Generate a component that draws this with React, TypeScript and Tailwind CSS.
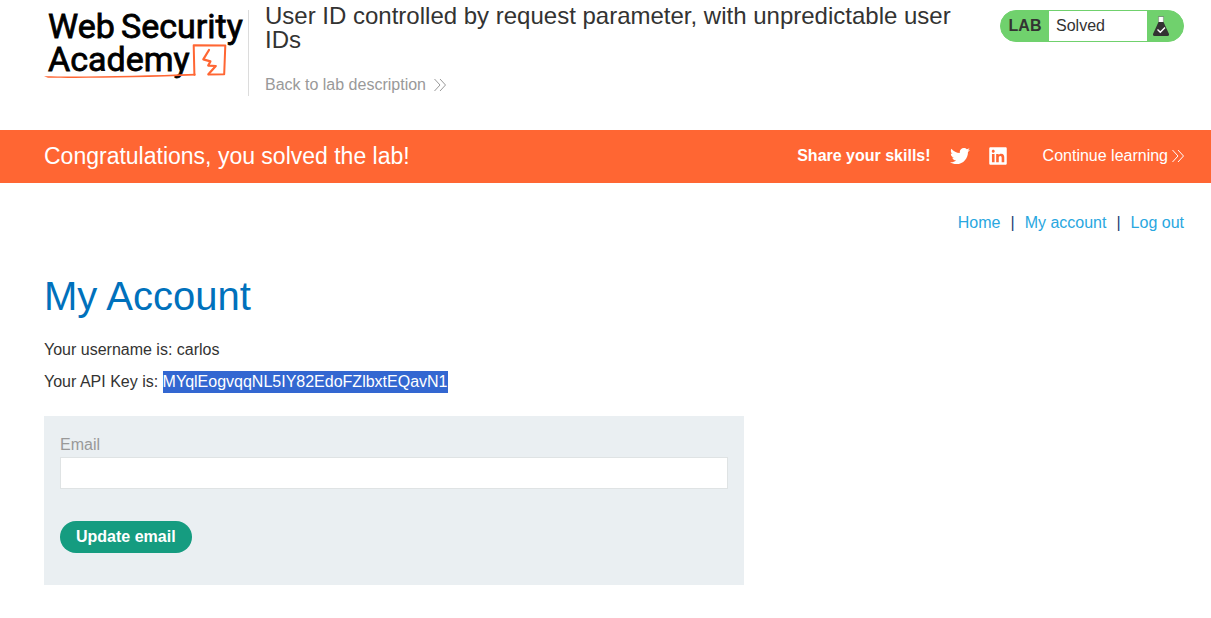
import type { ReactNode } from 'react';
import { FaLinkedin, FaTwitter } from 'react-icons/fa';

function Logo() {
  return (
    <svg viewBox="0 0 204 72" className="h-[72px] w-[204px] overflow-visible" role="img" aria-label="Web Security Academy">
      <g fill="#000" stroke="#000" strokeWidth=".8" fontFamily="Roboto, sans-serif" fontWeight="400" fontSize="34">
        <text x="4" y="28">Web</text>
        <text x="77" y="28">Security</text>
        <text x="4" y="61">Academy</text>
      </g>
      <g fill="none" stroke="#ff6633" strokeWidth="2" strokeLinejoin="round" strokeLinecap="round">
        <path d="M150.4 64.8 149.7 35.2 181.3 35.4 180.2 64.3 164.3 64.6" />
        <path d="M165 40 159.3 49.4 166.4 51.4 164.2 55.6 171.8 56 164.6 64" strokeWidth="2.2" />
      </g>
      <path d="M0 66.3 C40 67 100 66 151.5 63.8 L151.5 65.6 C100 67.8 40 68.2 4 67.8Z" fill="#ff6633" />
    </svg>
  );
}

function DoubleChevron() {
  return (
    <svg viewBox="0 0 12 14" className="h-3.5 w-3" fill="none" stroke="currentColor" strokeWidth="1" aria-hidden="true">
      <path d="M.5 1 6 7 .5 13M6 1 11.5 7 6 13" />
    </svg>
  );
}

function Flask() {
  return (
    <svg viewBox="0 0 16 20" className="h-5 w-4" aria-hidden="true">
      <path d="M5.5 1h5v5h-5z" fill="#fff" />
      <path d="M5.5 6h5L16 18q.3 2-1.6 2H1.6Q-.3 20 0 18z" fill="#333332" />
      <path d="M5 0.5h6M5.6 1v5M10.4 1v5" stroke="#777" strokeWidth=".6" fill="none" />
      <path d="m4.5 13.5 2.8 2.8 4.7-4.8" fill="none" stroke="#fff" strokeWidth="1.4" />
    </svg>
  );
}

function NavLink({ children }: { children: ReactNode }) {
  return (
    <a href="#" className="text-[#29a7df]">
      {children}
    </a>
  );
}

export default function App() {
  return (
    <div className="min-h-screen bg-white font-['Liberation_Sans',Arial,sans-serif] text-base text-[#333332]">
      <header className="flex items-start pt-2.5 pr-[27px] pb-[33px] pl-11">
        <a href="#" className="h-[86px] w-[205px] shrink-0 border-r border-[#dcdcdc]">
          <Logo />
        </a>
        <div className="-mt-1.5 ml-4 min-w-0 flex-1">
          <h2 className="text-2xl leading-6">
            User ID controlled by request parameter, with unpredictable user IDs
          </h2>
          <a href="#" className="mt-[21px] flex items-center gap-2 text-[#999]">
            Back to lab description
            <DoubleChevron />
          </a>
        </div>
        <div className="ml-9 flex h-8 w-[184px] shrink-0 items-stretch overflow-hidden rounded-full border border-[#70d16d] bg-[#70d16d]">
          <span className="flex w-12 items-center justify-center font-bold">LAB</span>
          <span className="flex flex-1 items-center bg-white pl-[7px]">Solved</span>
          <span className="flex w-9 items-center pl-1.5">
            <Flask />
          </span>
        </div>
      </header>

      <section className="flex h-[53px] items-center bg-[#ff6633] pr-[27px] pb-px pl-11 text-white">
        <h4 className="flex-1 text-[23px]">Congratulations, you solved the lab!</h4>
        <span className="mr-[19px] font-bold">Share your skills!</span>
        <a href="#" aria-label="Share on Twitter" className="mr-[18px]">
          <FaTwitter className="size-5" />
        </a>
        <a href="#" aria-label="Share on LinkedIn" className="mr-[35px]">
          <FaLinkedin className="size-5" />
        </a>
        <a href="#" className="flex items-center gap-1">
          Continue learning
          <DoubleChevron />
        </a>
      </section>

      <main className="pr-[27px] pl-11">
        <nav className="flex justify-end gap-2.5 pt-7">
          <NavLink>Home</NavLink>
          <span className="text-[#1d3f72]">|</span>
          <NavLink>My account</NavLink>
          <span className="text-[#1d3f72]">|</span>
          <NavLink>Log out</NavLink>
        </nav>

        <h1 className="mt-[37px] text-[40px] leading-[48px] text-[#0071bc]">My Account</h1>
        <p className="mt-[18px]">Your username is: carlos</p>
        <p className="mt-2">
          Your API Key is:{' '}
          <mark className="bg-[#3367d1] pt-0.5 pb-[3px] text-white">MYqlEogvqqNL5IY82EdoFZlbxtEQavN1</mark>
        </p>

        <form className="mt-[22px] max-w-[700px] bg-[#eaeff2] px-4 pt-[17px] pb-8" onSubmit={(e) => e.preventDefault()}>
          <label htmlFor="email" className="block text-[#999]">
            Email
          </label>
          <input
            id="email"
            type="email"
            className="block h-8 w-full border border-[#dfe3e4] bg-white px-2 outline-none"
          />
          <button type="submit" className="mt-8 block h-8 rounded-full bg-[#159c80] px-4 font-bold text-white">
            Update email
          </button>
        </form>
      </main>
    </div>
  );
}
